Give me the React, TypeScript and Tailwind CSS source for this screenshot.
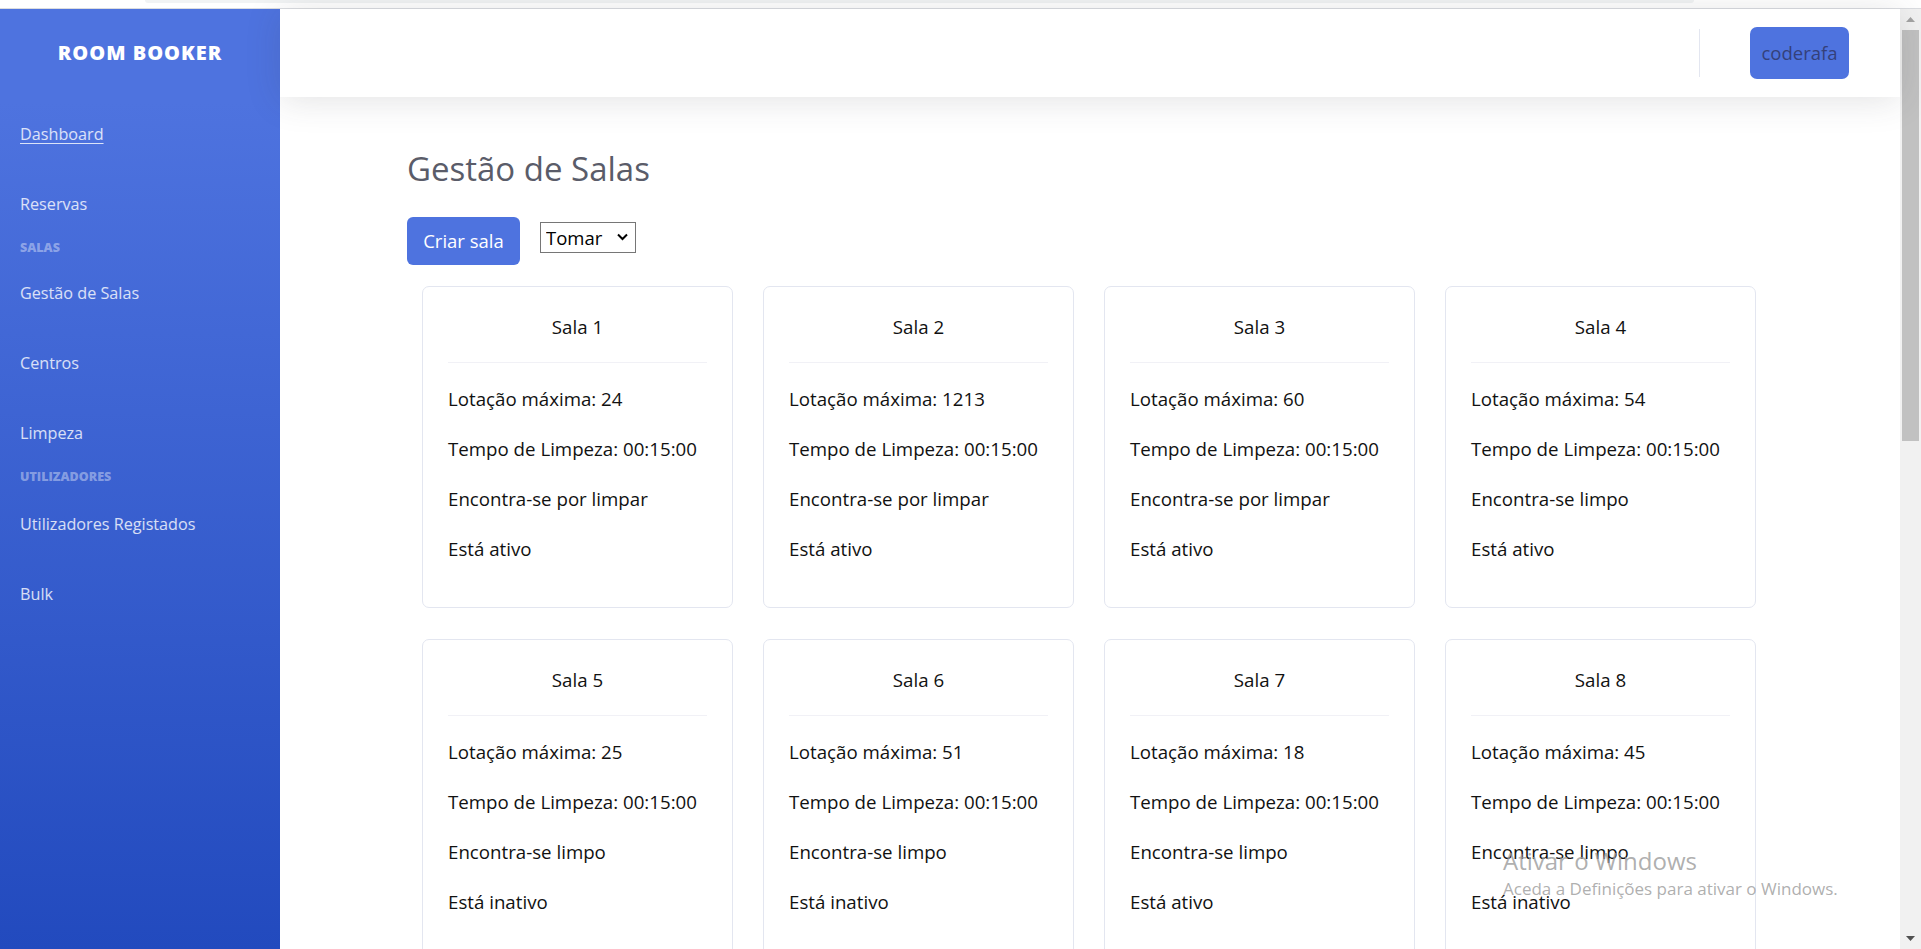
import React from 'react';

interface Room {
  name: string;
  capacity: number;
  clean: boolean;
  active: boolean;
}

const rooms: Room[] = [
  { name: 'Sala 1', capacity: 24, clean: false, active: true },
  { name: 'Sala 2', capacity: 1213, clean: false, active: true },
  { name: 'Sala 3', capacity: 60, clean: false, active: true },
  { name: 'Sala 4', capacity: 54, clean: true, active: true },
  { name: 'Sala 5', capacity: 25, clean: true, active: false },
  { name: 'Sala 6', capacity: 51, clean: true, active: false },
  { name: 'Sala 7', capacity: 18, clean: true, active: true },
  { name: 'Sala 8', capacity: 45, clean: true, active: false },
];

const NavLink = ({ label, underline }: { label: string; underline?: boolean }) => (
  <a
    href="#"
    className={`flex h-[70px] items-center px-[20px] text-[16.2px] text-white/80 ${underline ? 'underline underline-offset-[3px]' : ''}`}
  >
    {label}
  </a>
);

const NavHeading = ({ label, tall }: { label: string; tall?: boolean }) => (
  <div
    className={`flex items-center px-[20px] text-[12.5px] font-extrabold uppercase text-white/40 ${tall ? 'h-[21px] pb-[2px]' : 'h-[19px]'}`}
  >
    {label}
  </div>
);

const Sidebar = () => (
  <aside className="flex w-[280px] shrink-0 flex-col bg-[linear-gradient(180deg,#4e73df_10%,#224abe_100%)]">
    <div className="flex h-[88px] items-center justify-center">
      <span className="text-[20px] font-extrabold uppercase tracking-[1px] text-white">Room Booker</span>
    </div>
    <nav className="mt-[2px] flex flex-col">
      <NavLink label="Dashboard" underline />
      <NavLink label="Reservas" />
      <NavHeading label="Salas" />
      <NavLink label="Gestão de Salas" />
      <NavLink label="Centros" />
      <NavLink label="Limpeza" />
      <NavHeading label="Utilizadores" tall />
      <NavLink label="Utilizadores Registados" />
      <NavLink label="Bulk" />
    </nav>
  </aside>
);

const Topbar = () => (
  <header className="relative z-10 flex h-[88px] shrink-0 items-center justify-end bg-white pr-[51px] shadow-[0_3px_35px_0_rgba(58,59,69,0.15)]">
    <div className="h-[48px] w-px bg-[#e3e6f0]" />
    <button className="ml-[50px] h-[52px] w-[99px] rounded-[7px] bg-[#4e73df] text-[18.5px] text-[#34407a]">
      coderafa
    </button>
  </header>
);

const RoomCard = ({ room }: { room: Room }) => (
  <div className="rounded-[7px] border border-[#e3e6f0] bg-white px-[25px] pb-[23px] pt-[25px] text-[18.7px] text-[#111]">
    <div className="h-[30px] text-center leading-[30px]">{room.name}</div>
    <div className="mb-[21px] mt-[20px] border-t border-[#f1f1f6]" />
    <p className="mb-[20px] leading-[30px]">Lotação máxima: {room.capacity}</p>
    <p className="mb-[20px] leading-[30px]">Tempo de Limpeza: 00:15:00</p>
    <p className="mb-[20px] leading-[30px]">{room.clean ? 'Encontra-se limpo' : 'Encontra-se por limpar'}</p>
    <p className="mb-[20px] leading-[30px]">{room.active ? 'Está ativo' : 'Está inativo'}</p>
  </div>
);

const Scrollbar = () => (
  <div className="flex w-[21px] shrink-0 flex-col items-center bg-[#f1f1f1]">
    <div className="flex h-[21px] w-full items-center justify-center">
      <svg width="9" height="5" viewBox="0 0 9 5">
        <path d="M0 5 L4.5 0 L9 5 Z" fill="#a3a3a3" />
      </svg>
    </div>
    <div className="h-[411px] w-[17px] bg-[#c1c1c1]" />
    <div className="flex-1" />
    <div className="flex h-[21px] w-full items-center justify-center">
      <svg width="9" height="5" viewBox="0 0 9 5">
        <path d="M0 0 L9 0 L4.5 5 Z" fill="#505050" />
      </svg>
    </div>
  </div>
);

export default function App() {
  return (
    <div className="relative flex h-[949px] w-[1921px] flex-col overflow-hidden bg-white font-['Open_Sans',sans-serif]">
      <div className="h-[9px] shrink-0 border-b border-[#dadce0] bg-white">
        <div className="ml-[145px] h-[3px] w-[1549px] rounded-b-[3px] bg-[#f1f3f4]" />
      </div>
      <div className="flex min-h-0 flex-1">
        <Sidebar />
        <main className="flex min-w-0 flex-1 flex-col">
          <Topbar />
          <div className="pl-[127px] pt-[51px]">
            <h3 className="h-[42px] text-[33px] leading-[42px] text-[#5a5c69]">Gestão de Salas</h3>
            <div className="mt-[27px] flex items-start">
              <button className="h-[48px] w-[113px] rounded-[6px] bg-[#4e73df] text-[18.5px] text-white">
                Criar sala
              </button>
              <div className="relative ml-[20px] mt-[5px]">
                <select className="h-[31px] w-[96px] appearance-none border border-[#767676] bg-white pl-[5px] text-[18.5px] text-black outline-none">
                  <option>Tomar</option>
                </select>
                <svg
                  className="pointer-events-none absolute right-[8px] top-[11px]"
                  width="11"
                  height="8"
                  viewBox="0 0 11 8"
                  fill="none"
                >
                  <path d="M1 1.5 L5.5 6 L10 1.5" stroke="#000" strokeWidth="2" />
                </svg>
              </div>
            </div>
            <div className="ml-[15px] mt-[21px] grid grid-cols-[repeat(4,311px)] gap-x-[30px] gap-y-[31px]">
              {rooms.map((room) => (
                <RoomCard key={room.name} room={room} />
              ))}
            </div>
          </div>
        </main>
        <Scrollbar />
      </div>
      <div className="pointer-events-none absolute left-[1503px] top-[845px] text-[#9a9a9a]/80">
        <div className="text-[24px] leading-[32px]">Ativar o Windows</div>
        <div className="text-[17px] leading-[24px]">Aceda a Definições para ativar o Windows.</div>
      </div>
    </div>
  );
}
